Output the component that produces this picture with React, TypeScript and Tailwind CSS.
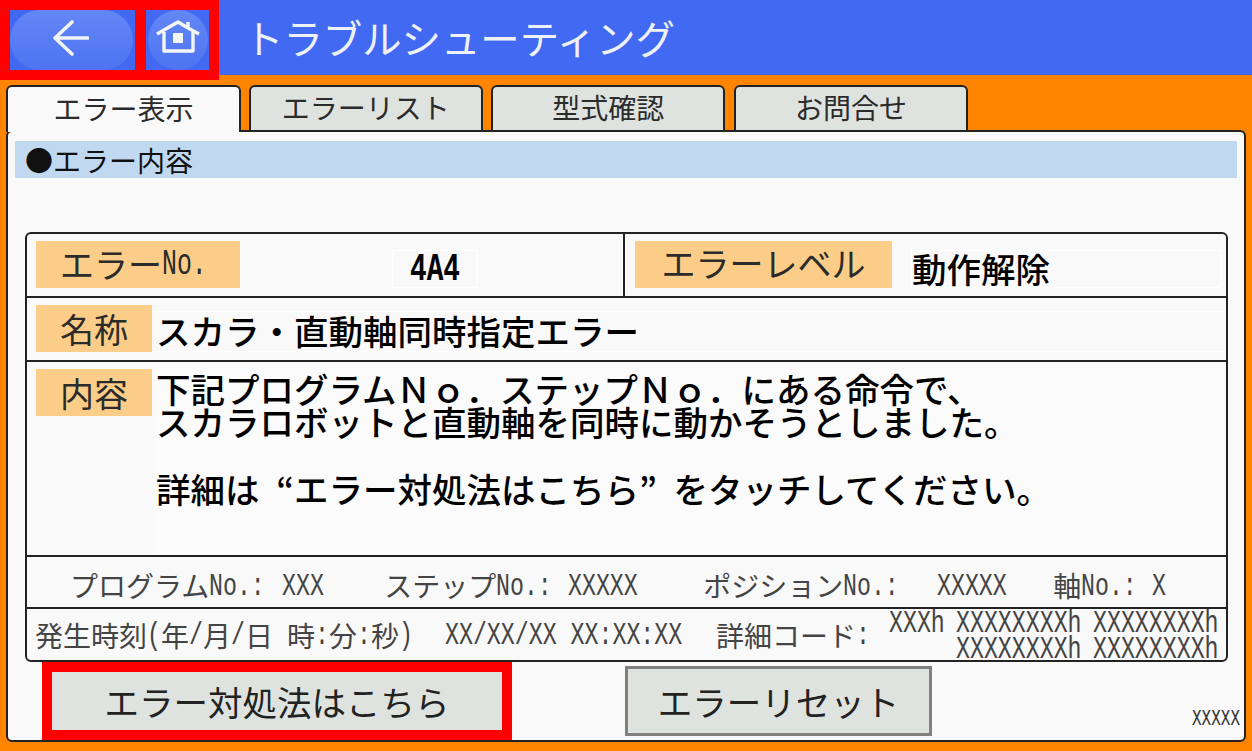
const jp = "font-['Noto_Sans_CJK_JP','Noto_Sans',sans-serif]";

// half-width latin, squeezed onto the panel's 14px character grid
function Half({ text, cell = 14, className = "" }: { text: string; cell?: number; className?: string }) {
  return (
    <span
      style={{ width: text.length * cell }}
      className={`inline-block shrink-0 origin-left translate-y-[1px] scale-x-[.75] whitespace-pre font-['Liberation_Mono',monospace] text-[31px] ${className}`}
    >
      {text}
    </span>
  );
}

function Label({ children, className = "" }: { children: React.ReactNode; className?: string }) {
  return (
    <div className={`flex h-[47px] shrink-0 items-center justify-center bg-[#fbcd88] text-[34px] leading-none text-[#2b2b2b] ${className}`}>
      {children}
    </div>
  );
}

function Tab({ label, active }: { label: string; active?: boolean }) {
  return (
    <div
      className={
        active
          ? "relative z-10 flex h-[47px] w-[235px] items-center justify-center rounded-t-[6px] border-2 border-b-0 border-[#222] bg-[#f9f9f9] pb-[3px] text-[28px] text-[#2b2b2b]"
          : "flex h-[45px] w-[234px] items-center justify-center rounded-t-[6px] border-2 border-b-0 border-[#222] bg-[#dfe3e0] pb-[3px] text-[28px] text-[#2b2b2b]"
      }
    >
      {label}
    </div>
  );
}

export default function App() {
  return (
    <div lang="ja" className={`flex h-[751px] w-[1252px] flex-col overflow-hidden bg-[#ff8400] ${jp}`}>
      {/* Header */}
      <div className="flex h-[75px] shrink-0 items-start bg-[#4169f2]">
        <div className="relative z-10 flex h-[80px] w-[219px] shrink-0 gap-[11px] bg-[#ff0000] p-[10px]">
          <div className="flex h-[60px] w-[125px] items-center bg-[#4169f2]">
            <div className="flex h-[60px] w-[123px] items-center justify-center rounded-full bg-gradient-to-b from-[#6487f5] to-[#4d73f1] pb-[5px] pr-[2px]">
              <svg viewBox="0 0 36 36" className="h-[36px] w-[36px]" fill="none" stroke="#f0f4f4" strokeWidth="3.6">
                <path d="M35 18H3M19 2 2 18l17 16" strokeLinecap="round" strokeLinejoin="round" />
              </svg>
            </div>
          </div>
          <div className="flex h-[60px] w-[63px] items-center justify-center bg-[#4169f2]">
            <div className="flex h-[60px] w-[60px] items-center justify-center rounded-full bg-gradient-to-b from-[#6487f5] to-[#4d73f1] pb-[7px]">
              <svg viewBox="0 0 44 33" className="h-[33px] w-[44px]" fill="none" stroke="#f4f6f6" strokeWidth="3.4">
                <path d="M1 14 22 2l10 6V2M32 8l11 6" strokeLinejoin="round" />
                <path d="M8 12v19h29V12" strokeLinejoin="round" />
                <rect x="17" y="13" width="10" height="10" fill="#f4f6f6" stroke="none" />
              </svg>
            </div>
          </div>
        </div>
        <div className="ml-[25px] flex h-[75px] items-center pb-[2px] text-[39.4px] leading-none text-[#eef2f6]">
          トラブルシューティング
        </div>
      </div>

      {/* Tabs */}
      <div className="mt-[10px] flex h-[45px] shrink-0 items-start gap-[8.67px] pl-[6px]">
        <div className="-mr-px flex">
          <Tab label="エラー表示" active />
        </div>
        <Tab label="エラーリスト" />
        <Tab label="型式確認" />
        <Tab label="お問合せ" />
      </div>

      {/* Panel */}
      <div className="ml-[6px] flex h-[612px] w-[1240px] flex-col rounded-[6px] border-2 border-[#222] bg-[#f9f9f9] pt-[9px]">
        <div className="mx-[7px] flex h-[37px] shrink-0 items-center bg-[#c0d8f0] pl-[10px] text-[28px] leading-none text-[#111]">
          ●エラー内容
        </div>

        {/* Detail table */}
        <div className="ml-[17px] mt-[54px] flex h-[430px] w-[1203px] shrink-0 flex-col rounded-[6px] border-2 border-[#222] text-black">
          <div className="flex h-[64px] shrink-0 border-b-2 border-[#222]">
            <div className="flex w-[598px] items-start border-r-2 border-[#222] pl-[9px] pt-[7px]">
              <Label className="w-[204px] justify-start pb-[2px] pl-[24px]">
                エラー
                <Half text="No." cell={15} className="!text-[36px] !scale-x-[.69]" />
              </Label>
              <div className="ml-[152px] mt-[9px] flex h-[38px] w-[86px] items-center justify-center border border-white">
                <Half text="4A4" cell={16.7} className="!text-[38px] font-bold leading-none !scale-x-[.73]" />
              </div>
            </div>
            <div className="flex flex-1 items-start pl-[10px] pt-[7px]">
              <Label className="w-[257px] pb-[3px]">エラーレベル</Label>
              <div className="ml-[19px] mt-[9px] flex h-[38px] w-[310px] items-center border border-white pb-[2px] text-[34.5px] font-medium leading-none">
                動作解除
              </div>
            </div>
          </div>

          <div className="flex h-[64px] shrink-0 items-start border-b-2 border-[#222] pl-[9px] pt-[7px]">
            <Label className="w-[116px]">名称</Label>
            <div className="mt-[6px] flex h-[41px] flex-1 items-center border-y border-white pb-[3px] pl-[4px] text-[34.5px] font-medium leading-none">
              スカラ・直動軸同時指定エラー
            </div>
          </div>

          <div className="flex h-[195px] shrink-0 items-start border-b-2 border-[#222] pl-[9px] pt-[7px]">
            <Label className="w-[116px]">内容</Label>
            <div className="ml-[3px] h-[186px] flex-1 bg-[#fbfbfb] pl-[1px] pt-[3px] text-[34.5px] font-medium leading-[33.3px]">
              <div>下記プログラムＮｏ．ステップＮｏ．にある命令で、</div>
              <div>スカラロボットと直動軸を同時に動かそうとしました。</div>
              <div className="mt-[33.3px]">
                詳細は<span className="inline-block w-[34.5px] text-right">“</span>エラー対処法はこちら
                <span className="inline-block w-[34.5px] text-left">”</span>をタッチしてください。
              </div>
            </div>
          </div>

          <div className="flex h-[52px] shrink-0 items-center border-b-2 border-[#222] pl-[43px] pt-[6px] text-[28px] leading-none text-[#444]">
            <span>プログラム</span>
            <Half text="No.: " />
            <Half text="XXX" className="ml-[3px]" />
            <span className="ml-[60px]">ステップ</span>
            <Half text="No.: " />
            <Half text="XXXXX" className="ml-[2px]" />
            <span className="ml-[65px]">ポジション</span>
            <Half text="No.:" />
            <Half text="XXXXX" className="ml-[38px]" />
            <span className="ml-[46px]">軸</span>
            <Half text="No.: " />
            <Half text="X" className="ml-[1px]" />
          </div>

          <div className="flex min-h-0 flex-1 items-center pl-[8px] text-[28px] leading-none text-[#444]">
            <span>発生時刻</span>
            <Half text="(" />
            <span>年</span>
            <Half text="/" />
            <span>月</span>
            <Half text="/" />
            <span>日</span>
            <Half text=" " />
            <span>時</span>
            <Half text=":" />
            <span>分</span>
            <Half text=":" />
            <span>秒</span>
            <Half text=")" />
            <Half text="XX/XX/XX XX:XX:XX" className="ml-[32px]" />
            <span className="ml-[33px]">詳細コード</span>
            <Half text=":" />
            <div className="ml-auto flex flex-col items-end pr-[7px] pt-[3px] leading-[26px]">
              <div className="flex gap-[11px]">
                <Half text="XXXh" />
                <Half text="XXXXXXXXh" />
                <Half text="XXXXXXXXh" />
              </div>
              <div className="flex gap-[11px]">
                <Half text="XXXXXXXXh" />
                <Half text="XXXXXXXXh" />
              </div>
            </div>
          </div>
        </div>

        {/* Buttons */}
        <div className="flex min-h-0 flex-1 items-center">
          <div className="ml-[34px] flex h-[78px] w-[470px] items-center justify-center border-[10px] border-[#ff0000] bg-[#dfe3e0] text-[34.5px] leading-none text-[#222]">
            エラー対処法はこちら
          </div>
          <div className="ml-[113px] flex h-[70px] w-[307px] items-center justify-center border-[3px] border-[#808080] bg-[#dfe3e0] text-[34.5px] leading-none text-[#222]">
            エラーリセット
          </div>
          <div className="ml-auto self-end pb-[10px] pr-[4px] text-[#333]">
            <Half text="XXXXX" cell={9.6} className="!text-[22px] leading-none !scale-x-[.727]" />
          </div>
        </div>
      </div>
    </div>
  );
}
